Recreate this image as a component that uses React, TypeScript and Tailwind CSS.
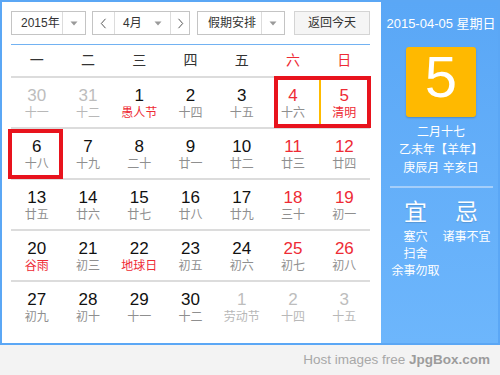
import React from "react";

type Day = {
  n: number;
  lunar: string;
  tone?: "muted" | "weekend";
  festival?: boolean;
  today?: boolean;
};

const WEEKDAYS = ["一", "二", "三", "四", "五", "六", "日"];

const ROWS: Day[][] = [
  [
    { n: 30, lunar: "十一", tone: "muted" },
    { n: 31, lunar: "十二", tone: "muted" },
    { n: 1, lunar: "愚人节", festival: true },
    { n: 2, lunar: "十四" },
    { n: 3, lunar: "十五" },
    { n: 4, lunar: "十六", tone: "weekend" },
    { n: 5, lunar: "清明", tone: "weekend", festival: true, today: true },
  ],
  [
    { n: 6, lunar: "十八" },
    { n: 7, lunar: "十九" },
    { n: 8, lunar: "二十" },
    { n: 9, lunar: "廿一" },
    { n: 10, lunar: "廿二" },
    { n: 11, lunar: "廿三", tone: "weekend" },
    { n: 12, lunar: "廿四", tone: "weekend" },
  ],
  [
    { n: 13, lunar: "廿五" },
    { n: 14, lunar: "廿六" },
    { n: 15, lunar: "廿七" },
    { n: 16, lunar: "廿八" },
    { n: 17, lunar: "廿九" },
    { n: 18, lunar: "三十", tone: "weekend" },
    { n: 19, lunar: "初一", tone: "weekend" },
  ],
  [
    { n: 20, lunar: "谷雨", festival: true },
    { n: 21, lunar: "初三" },
    { n: 22, lunar: "地球日", festival: true },
    { n: 23, lunar: "初五" },
    { n: 24, lunar: "初六" },
    { n: 25, lunar: "初七", tone: "weekend" },
    { n: 26, lunar: "初八", tone: "weekend" },
  ],
  [
    { n: 27, lunar: "初九" },
    { n: 28, lunar: "初十" },
    { n: 29, lunar: "十一" },
    { n: 30, lunar: "十二" },
    { n: 1, lunar: "劳动节", tone: "muted" },
    { n: 2, lunar: "十四", tone: "muted" },
    { n: 3, lunar: "十五", tone: "muted" },
  ],
];

function Caret() {
  return (
    <svg width="8" height="5" viewBox="0 0 8 5">
      <path d="M0.5 0.5 L7.5 0.5 L4 4.5 Z" fill="#9a9a9a" />
    </svg>
  );
}

function Chevron({ dir }: { dir: "left" | "right" }) {
  return (
    <svg width="7" height="11" viewBox="0 0 7 11">
      <path
        d={dir === "left" ? "M5.5 0.8 L1.3 5.5 L5.5 10.2" : "M1.5 0.8 L5.7 5.5 L1.5 10.2"}
        fill="none"
        stroke="#555"
        strokeWidth="1"
      />
    </svg>
  );
}

function DayCell({ day }: { day: Day }) {
  const numColor =
    day.tone === "muted" ? "text-[#bdbdbd]" : day.tone === "weekend" ? "text-[#ee2b35]" : "text-[#111]";
  const lunarColor =
    day.tone === "muted"
      ? "text-[#b8b8b8]"
      : day.festival
        ? "text-[#ee2b35]"
        : "text-[#8f8f8f]";

  return (
    <div className="relative flex flex-col items-center pt-[8px]">
      <span className={`text-[17px] leading-[20px] ${numColor}`}>{day.n}</span>
      <span className={`text-[12px] leading-[14px] ${lunarColor}`}>{day.lunar}</span>
      {day.today && <div className="absolute inset-x-0 top-0 bottom-0 border-2 border-[#ffbb00]" />}
    </div>
  );
}

export default function App() {
  return (
    <div className="w-[500px] h-[375px] bg-[#f3f3f3] flex flex-col font-['Liberation_Sans','Noto_Sans_CJK_SC',sans-serif]">
      <div className="h-[345px] border-2 border-[#5ba7f5] flex">
        {/* calendar panel */}
        <div className="relative w-[379px] bg-white pl-[9px]">
          <div className="mt-[9px] h-[24px] flex text-[12px] text-[#333] whitespace-nowrap">
            <div className="w-[75px] flex border border-[#c4c4c4] bg-white">
              <span className="flex-1 flex items-center pl-[9px]">2015年</span>
              <span className="w-[23px] flex items-center justify-center border-l border-[#dcdcdc]">
                <Caret />
              </span>
            </div>

            <div className="ml-[6px] w-[98px] flex border border-[#c4c4c4] bg-white">
              <span className="w-[22px] flex items-center justify-center border-r border-[#dcdcdc]">
                <Chevron dir="left" />
              </span>
              <span className="w-[55px] flex items-center justify-between pl-[8px] pr-[8px]">
                4月
                <Caret />
              </span>
              <span className="flex-1 flex items-center justify-center border-l border-[#dcdcdc]">
                <Chevron dir="right" />
              </span>
            </div>

            <div className="ml-[7px] w-[88px] flex border border-[#c4c4c4] bg-white">
              <span className="flex-1 flex items-center pl-[10px]">假期安排</span>
              <span className="w-[23px] flex items-center justify-center border-l border-[#dcdcdc]">
                <Caret />
              </span>
            </div>

            <button className="ml-[9px] w-[76px] border border-[#d4d4d4] bg-[#f5f5f5] text-[12px] text-[#333]">
              返回今天
            </button>
          </div>

          <div className="mt-[9px] w-[359px] h-[1px] bg-[#72b2f2]" />

          <div className="w-[359px] grid grid-cols-7 h-[33px] border-b-2 border-[#dcdcdc] text-[14px]">
            {WEEKDAYS.map((w, i) => (
              <span
                key={w}
                className={`flex items-center justify-center ${i >= 5 ? "text-[#ee2b35]" : "text-[#333]"}`}
              >
                {w}
              </span>
            ))}
          </div>

          {ROWS.map((row, r) => (
            <div
              key={r}
              className={`w-[359px] h-[51px] grid grid-cols-7 ${r < ROWS.length - 1 ? "border-b-2 border-[#dcdcdc]" : ""}`}
            >
              {row.map((d, i) => (
                <DayCell key={i} day={d} />
              ))}
            </div>
          ))}

          {/* red highlight marks */}
          <div className="absolute left-[272px] top-[74px] w-[97px] h-[52px] border-4 border-[#e8131d]" />
          <div className="absolute left-[6px] top-[127px] w-[55px] h-[50px] border-4 border-[#e8131d]" />
        </div>

        {/* day detail panel */}
        <div className="flex-1 bg-gradient-to-b from-[#5aa7f6] to-[#6db6fc] pl-[3px] flex flex-col items-center text-white">
          <div className="mt-[13px] text-[13px] leading-[18px]">2015-04-05 星期日</div>
          <div className="mt-[14px] w-[70px] h-[70px] rounded-[3px] bg-[#ffb900] shadow-[0_1px_2px_rgba(0,0,0,0.2)] flex items-center justify-center pb-[10px]">
            <span className="text-[58px] leading-none">5</span>
          </div>
          <div className="mt-[6px] flex flex-col items-center text-[12px] leading-[18px]">
            <span>二月十七</span>
            <span>乙未年【羊年】</span>
            <span>庚辰月 辛亥日</span>
          </div>
          <div className="mt-[9px] w-[103px] h-[2px] bg-[#a4cefa]" />
          <div className="mt-[11px] w-[102px] grid grid-cols-2">
            <div className="flex flex-col items-center">
              <span className="text-[23px] leading-[26px] [text-shadow:0_1px_1px_rgba(0,0,0,0.15)]">宜</span>
              <div className="mt-[4px] flex flex-col items-center text-[12px] leading-[17px]">
                <span>塞穴</span>
                <span>扫舍</span>
                <span>余事勿取</span>
              </div>
            </div>
            <div className="flex flex-col items-center">
              <span className="text-[23px] leading-[26px] [text-shadow:0_1px_1px_rgba(0,0,0,0.15)]">忌</span>
              <div className="mt-[4px] flex flex-col items-center text-[12px] leading-[17px]">
                <span>诸事不宜</span>
              </div>
            </div>
          </div>
        </div>
      </div>

      <div className="flex-1 flex items-center justify-end pr-[10px] text-[13.5px] text-[#a8a8a8]">
        Host images free&nbsp;<span className="font-bold text-[#9c9c9c]">JpgBox.com</span>
      </div>
    </div>
  );
}
